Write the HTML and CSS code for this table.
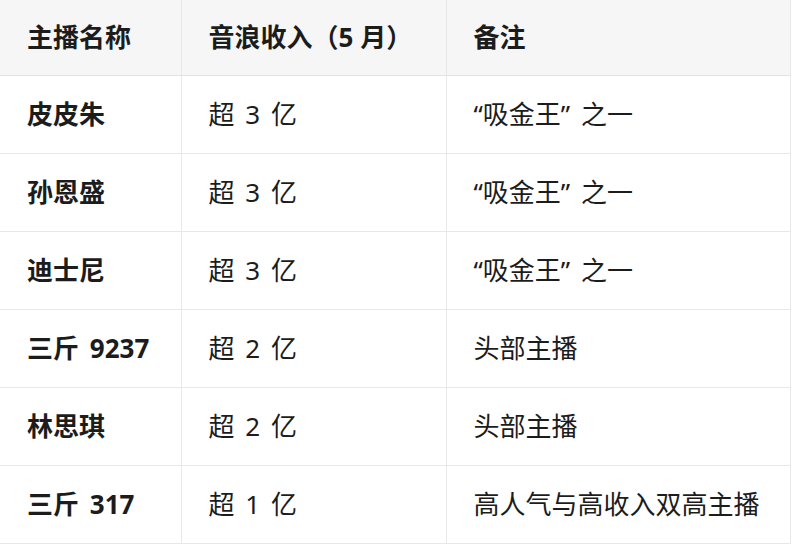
FILE: index.html
```html
<!DOCTYPE html>
<html lang="zh-CN">
<head>
<meta charset="utf-8">
<title>主播收入</title>
<link rel="stylesheet" href="styles.css">
</head>
<body>
<table class="data-table">
  <colgroup>
    <col class="col-name">
    <col class="col-income">
    <col class="col-note">
  </colgroup>
  <thead>
    <tr><th>主播名称</th><th>音浪收入（5 月）</th><th>备注</th></tr>
  </thead>
  <tbody>
    <tr><td class="name">皮皮朱</td><td>超 3 亿</td><td>“吸金王” 之一</td></tr>
    <tr><td class="name">孙恩盛</td><td>超 3 亿</td><td>“吸金王” 之一</td></tr>
    <tr><td class="name">迪士尼</td><td>超 3 亿</td><td>“吸金王” 之一</td></tr>
    <tr><td class="name">三斤 9237</td><td>超 2 亿</td><td>头部主播</td></tr>
    <tr><td class="name">林思琪</td><td>超 2 亿</td><td>头部主播</td></tr>
    <tr><td class="name">三斤 317</td><td>超 1 亿</td><td>高人气与高收入双高主播</td></tr>
  </tbody>
</table>
</body>
</html>
```
FILE: styles.css
```css
html, body {
  margin: 0;
  padding: 0;
  background: #ffffff;
}
body {
  font-family: "Noto Sans", "Noto Sans CJK SC", sans-serif;
  color: #1c1c1c;
  font-size: 26px;
}
.data-table {
  border-collapse: collapse;
  table-layout: fixed;
  width: 790px;
}
.col-name { width: 181px; }
.col-income { width: 265px; }
.col-note { width: 344px; }
.data-table th,
.data-table td {
  text-align: left;
  padding: 0 26px 0 27px;
  height: 78px;
  line-height: 39px;
  word-spacing: 4px;
  border-bottom: 1px solid #e8e8e8;
  border-right: 1px solid #e8e8e8;
  white-space: nowrap;
  box-sizing: border-box;
}
.data-table th {
  background: #f6f6f6;
  font-weight: 700;
  height: 75px;
  word-spacing: 0;
  border-bottom-color: #e2e2e2;
}
.data-table td {
  font-weight: 400;
}
.data-table td.name {
  font-weight: 700;
  word-spacing: 4px;
}
```
